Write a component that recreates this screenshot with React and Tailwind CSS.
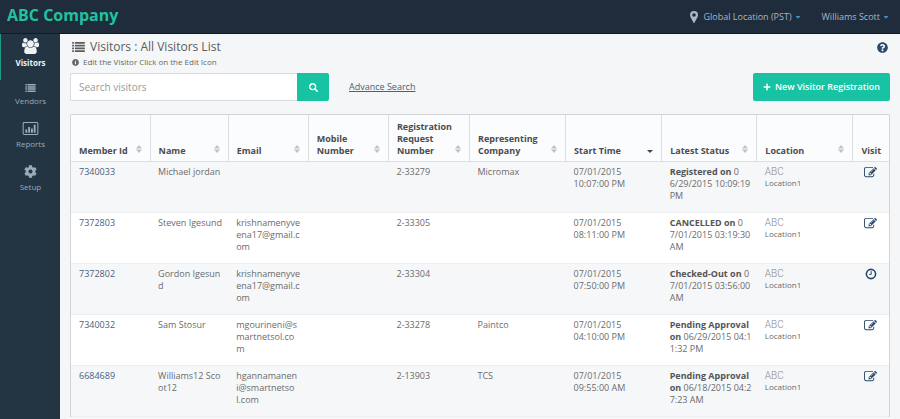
import { FaCog, FaInfoCircle, FaPlus, FaQuestionCircle, FaSearch, FaCaretDown } from 'react-icons/fa'

const columns = [
  { key: 'id', label: 'Member Id', width: 'w-[79px]', sort: 'both' },
  { key: 'name', label: 'Name', width: 'w-[78px]', sort: 'both' },
  { key: 'email', label: 'Email', width: 'w-[80px]', sort: 'both' },
  { key: 'mobile', label: 'Mobile Number', width: 'w-[80px]', sort: 'both' },
  { key: 'request', label: 'Registration Request Number', width: 'w-[81px]', sort: 'both' },
  { key: 'company', label: 'Representing Company', width: 'w-[96px]', sort: 'both' },
  { key: 'start', label: 'Start Time', width: 'w-[96px]', sort: 'desc' },
  { key: 'status', label: 'Latest Status', width: 'w-[95px]', sort: 'both' },
  { key: 'location', label: 'Location', width: 'w-[96px]', sort: 'both' },
  { key: 'visit', label: 'Visit', width: 'w-[36px]', sort: null },
]

const visitors = [
  { id: '7340033', name: 'Michael jordan', email: '', request: '2-33279', company: 'Micromax', start: '07/01/2015\n10:07:00 PM', status: ['Registered on'], at: ['0', '6/29/2015 10:09:19', 'PM'], visit: 'edit' },
  { id: '7372803', name: 'Steven Igesund', email: 'krishnamenyve\nena17@gmail.c\nom', request: '2-33305', company: '', start: '07/01/2015\n08:11:00 PM', status: ['CANCELLED on'], at: ['0', '7/01/2015 03:19:30', 'AM'], visit: 'edit' },
  { id: '7372802', name: 'Gordon Igesun\nd', email: 'krishnamenyve\nena17@gmail.c\nom', request: '2-33304', company: '', start: '07/01/2015\n07:50:00 PM', status: ['Checked-Out on'], at: ['0', '7/01/2015 03:56:00', 'AM'], visit: 'clock' },
  { id: '7340032', name: 'Sam Stosur', email: 'mgourineni@s\nmartnetsol.co\nm', request: '2-33278', company: 'Paintco', start: '07/01/2015\n04:10:00 PM', status: ['Pending Approval', 'on'], at: ['06/29/2015 04:1', '1:32 PM'], visit: 'edit' },
  { id: '6684689', name: 'Williams12 Sco\not12', email: 'hgannamanen\ni@smartnetso\nl.com', request: '2-13903', company: 'TCS', start: '07/01/2015\n09:55:00 AM', status: ['Pending Approval', 'on'], at: ['06/18/2015 04:2', '7:23 AM'], visit: 'edit' },
]

function UsersIcon({ className }) {
  return (
    <svg viewBox="0 0 1920 1792" className={className} fill="currentColor" aria-hidden="true">
      <path d="M593 896q-162 5-265 128h-134q-82 0-138-40.5t-56-118.5q0-353 124-353 6 0 43.5 21t97.5 42.5 119 21.5q67 0 133-23-5 37-5 66 0 159 90 287zm1071 637q0 120-73 189.5t-194 69.5h-874q-121 0-194-69.5t-73-189.5q0-53 3.5-103.5t14-109 26.5-108.5 43-97.5 62-81 85.5-53.5 111.5-20q10 0 43 21.5t73 48 107 48 135 21.5 135-21.5 107-48 73-48 43-21.5q61 0 111.5 20t85.5 53.5 62 81 43 97.5 26.5 108.5 14 109 3.5 103.5zm-1024-1277q0 106-75 181t-181 75-181-75-75-181 75-181 181-75 181 75 75 181zm704 384q0 159-112.5 271.5t-271.5 112.5-271.5-112.5-112.5-271.5 112.5-271.5 271.5-112.5 271.5 112.5 112.5 271.5zm576 225q0 78-56 118.5t-138 40.5h-134q-103-123-265-128 90-128 90-287 0-29-5-66 66 23 133 23 59 0 119-21.5t97.5-42.5 43.5-21q124 0 124 353zm-128-609q0 106-75 181t-181 75-181-75-75-181 75-181 181-75 181 75 75 181z" />
    </svg>
  )
}

function ListIcon({ className }) {
  return (
    <svg viewBox="0 0 14 11" className={className} fill="currentColor" aria-hidden="true">
      {[0, 3, 6, 9].map((y) => (
        <g key={y}>
          <rect x="0" y={y} width="2" height="2" rx="0.3" />
          <rect x="3" y={y} width="11" height="2" rx="0.3" />
        </g>
      ))}
    </svg>
  )
}

function ChartIcon({ className }) {
  return (
    <svg viewBox="0 0 17 14" className={className} aria-hidden="true">
      <rect x="0.6" y="0.6" width="15.8" height="12.8" rx="1" fill="none" stroke="currentColor" strokeWidth="1.1" />
      <path d="M3 8h2v3.5H3zM6 5.5h2v6H6zM9 7h2v4.5H9zM12 3h2v8.5h-2z" fill="currentColor" />
    </svg>
  )
}

function MarkerIcon() {
  return (
    <svg viewBox="0 0 8 12" className="mr-[5px] h-3 w-2" fill="currentColor" fillRule="evenodd" aria-hidden="true">
      <path d="M4 0a4 4 0 0 1 4 4c0 1-.3 1.700-.7 2.500L4.600 11.600a.7.7 0 0 1-1.200 0L.7 6.500C.3 5.700 0 5 0 4a4 4 0 0 1 4-4zM4 2.200a1.800 1.800 0 1 0 0 3.600 1.800 1.800 0 0 0 0-3.600z" />
    </svg>
  )
}

function EditIcon() {
  return (
    <svg viewBox="0 0 1792 1792" className="size-[13px]" fill="currentColor" aria-hidden="true">
      <path d="M888 1184l116-116-152-152-116 116v56h96v96h56zm440-720q-16-16-33 1l-350 350q-17 17-1 33t33-1l350-350q17-17 1-33zm80 594v190q0 119-84.5 203.5t-203.5 84.5h-832q-119 0-203.5-84.5t-84.5-203.5v-832q0-119 84.5-203.5t203.5-84.5h832q63 0 117 25 15 7 18 23 3 17-9 29l-49 49q-14 14-32 8-23-6-45-6h-832q-66 0-113 47t-47 113v832q0 66 47 113t113 47h832q66 0 113-47t47-113v-126q0-13 9-22l64-64q15-15 35-7t20 29zm-96-738l288 288-672 672h-288v-288zm444 132l-92 92-288-288 92-92q28-28 68-28t68 28l152 152q28 28 28 68t-28 68z" />
    </svg>
  )
}

function ClockIcon() {
  return (
    <svg viewBox="0 0 12 12" className="size-[12px]" fill="none" stroke="currentColor" aria-hidden="true">
      <circle cx="6" cy="6" r="4.6" strokeWidth="1.6" />
      <path d="M6.2 3.2v3.2H4.2" strokeWidth="1" />
    </svg>
  )
}

function SortIcon({ sort }) {
  if (sort === 'desc') {
    return (
      <svg viewBox="0 0 6 8" className="mb-[2px] h-2 w-1.5 shrink-0" fill="#444" aria-hidden="true">
        <path d="M0 3h6L3 6z" />
      </svg>
    )
  }
  return (
    <svg viewBox="0 0 6 8" className="mb-1 h-2 w-1.5 shrink-0" fill="#bfc1c4" aria-hidden="true">
      <path d="M0 3.5h6L3 0zM0 4.5h6L3 8z" />
    </svg>
  )
}

const navItems = [
  { label: 'Visitors', icon: <UsersIcon className="h-4 w-[17px]" />, active: true },
  { label: 'Vendors', icon: <ListIcon className="h-2 w-[11px]" /> },
  { label: 'Reports', icon: <ChartIcon className="h-[13px] w-[17px]" /> },
  { label: 'Setup', icon: <FaCog className="size-[13px]" /> },
]

function TopBar() {
  return (
    <header className="flex h-[34px] items-center justify-between border-b border-[#101a2b] bg-[#1f2c3b] pr-[10px] pl-[7px]">
      <a href="#home" className="pb-1 text-[16px] leading-6 font-bold text-[#1fc3a2]">ABC Company</a>
      <div className="flex items-center gap-5 text-[9px] leading-4 text-[#a9b6c3]">
        <button type="button" className="flex items-center">
          <MarkerIcon />
          Global Location (PST)
          <FaCaretDown className="ml-[2px] size-2 text-[#3f8fcb]" />
        </button>
        <button type="button" className="flex items-center">
          Williams Scott
          <FaCaretDown className="ml-[2px] size-2 text-[#3f8fcb]" />
        </button>
      </div>
    </header>
  )
}

function Sidebar() {
  return (
    <nav className="w-[60px] shrink-0 bg-[#233443] text-[8px] leading-[14px]">
      {navItems.map((item) => (
        <a
          key={item.label}
          href={`#${item.label.toLowerCase()}`}
          className={`flex flex-col items-center gap-[2px] border-l pt-1 pb-[10px] ${
            item.active ? 'border-[#1c9c85] font-bold text-[#eef2f5]' : 'border-transparent text-[#9dabb8]'
          }`}
        >
          {item.icon}
          {item.label}
        </a>
      ))}
    </nav>
  )
}

function StatusCell({ status, at }) {
  const bold = status.map((text) => <b key={text} className="text-[#555]">{text}</b>)
  const [first, ...rest] = at

  return (
    <td>
      {bold.slice(0, -1).map((line) => (
        <div key={line.key}>{line}</div>
      ))}
      <div>{bold[bold.length - 1]} {first}</div>
      {rest.map((line) => (
        <div key={line}>{line}</div>
      ))}
    </td>
  )
}

function VisitorTable() {
  return (
    <div className="mt-[13px] overflow-hidden rounded-t-xs border border-b-0 border-[#d2d4d8] bg-white">
      <table className="w-full table-fixed border-collapse text-left text-[9px] leading-3 text-[#6b6b6b]">
        <thead>
          <tr className="h-[46px] bg-[#fbfcfe]">
            {columns.map((col) => (
              <th
                key={col.key}
                scope="col"
                className={`${col.width} border-r border-b border-[#dcdee1] px-2 pb-1 align-bottom font-bold text-[#4c4c4c] last:border-r-0`}
              >
                <span className="flex items-end justify-between">
                  {col.label}
                  {col.sort && <SortIcon sort={col.sort} />}
                </span>
              </th>
            ))}
          </tr>
        </thead>
        <tbody>
          {visitors.map((v) => (
            <tr
              key={v.id}
              className="h-[51px] border-b border-[#eeeff1] align-top whitespace-pre odd:bg-[#f6f7f9] *:px-2 *:pt-1"
            >
              <td><a href={`#member-${v.id}`} className="text-[#48617c]">{v.id}</a></td>
              <td>{v.name}</td>
              <td>{v.email}</td>
              <td />
              <td>{v.request}</td>
              <td>{v.company}</td>
              <td>{v.start}</td>
              <StatusCell status={v.status} at={v.at} />
              <td>
                <span className="block font-[Roboto] text-[10px] font-light text-[#8a8a8a]">ABC</span>
                <span className="block text-[8px] leading-[10px]">Location1</span>
              </td>
              <td>
                <button
                  type="button"
                  aria-label={v.visit === 'edit' ? 'Edit visit' : 'Visit history'}
                  className="mx-auto block text-[#2a4868]"
                >
                  {v.visit === 'edit' ? <EditIcon /> : <ClockIcon />}
                </button>
              </td>
            </tr>
          ))}
        </tbody>
      </table>
    </div>
  )
}

export default function App() {
  return (
    <div className="flex min-h-screen flex-col bg-[#f5f6f8] font-['Open_Sans',sans-serif]">
      <TopBar />
      <div className="flex grow">
        <Sidebar />
        <main className="min-w-0 grow px-[10px] pt-1">
          <div className="flex items-start justify-between">
            <h1 className="flex items-center gap-[5px] pl-[2px] text-[12px] leading-[18px] text-[#5c5c5c]">
              <ListIcon className="h-[10px] w-[13px]" />
              Visitors : All Visitors List
            </h1>
            <button type="button" aria-label="Help" className="mt-1 mr-[2px] text-[#2a4868]">
              <FaQuestionCircle className="size-[11px]" />
            </button>
          </div>
          <p className="flex items-center gap-1 pl-[2px] text-[8px] leading-3 text-[#666]">
            <FaInfoCircle className="size-[7px]" />
            Edit the Visitor Click on the Edit Icon
          </p>
          <div className="mt-[5px] flex items-center">
            <form className="flex h-7" onSubmit={(e) => e.preventDefault()}>
              <input
                type="text"
                aria-label="Search visitors"
                placeholder="Search visitors"
                className="w-[227px] rounded-l-xs border border-r-0 border-[#d8dadd] bg-white px-2 text-[10px] text-[#555] outline-none placeholder:text-[#999]"
              />
              <button
                type="submit"
                aria-label="Search"
                className="flex w-8 items-center justify-center rounded-r-xs bg-[#17c3a3] text-white"
              >
                <FaSearch className="size-[9px]" />
              </button>
            </form>
            <a href="#advance-search" className="ml-5 text-[9px] leading-4 text-[#48617c] underline">Advance Search</a>
            <button
              type="button"
              className="ml-auto flex h-7 items-center gap-1 rounded-xs bg-[#17c3a3] px-[10px] text-[9px] font-semibold text-white"
            >
              <FaPlus className="size-2" />
              New Visitor Registration
            </button>
          </div>
          <VisitorTable />
        </main>
      </div>
    </div>
  )
}
